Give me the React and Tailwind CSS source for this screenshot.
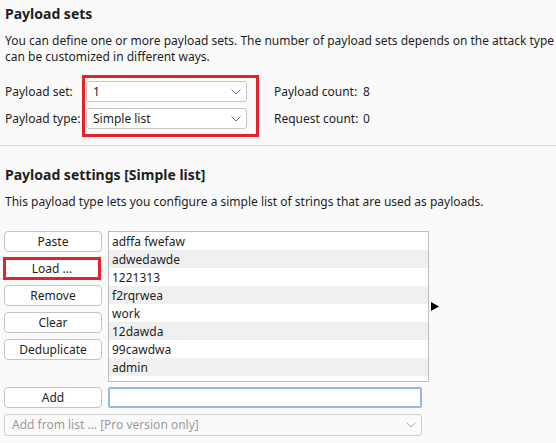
import React from "react";

const RED = "border-[#e5212b]";

function Chevron({ className = "" }) {
  return (
    <svg width="10" height="6" viewBox="0 0 10 6" className={className}>
      <path d="M0.5 0.5 L5 5 L9.5 0.5" fill="none" stroke="currentColor" strokeWidth="1" />
    </svg>
  );
}

function Select({ value, className = "" }) {
  return (
    <div
      className={`flex h-[21px] w-[161px] items-center justify-between rounded-[3px] border border-[#c6c6c6] bg-white pl-[6px] pr-[5px] ${className}`}
    >
      <span>{value}</span>
      <Chevron className="text-[#6b6b6b]" />
    </div>
  );
}

function Btn({ children, red = false }) {
  if (red) {
    return (
      <div className={`-ml-[1px] -my-[1px] flex h-[23px] w-[98px] items-center justify-center border-[3px] ${RED} bg-white`}>
        {children}
      </div>
    );
  }
  return (
    <div className="flex h-[21px] w-[98px] items-center justify-center rounded-[4px] border border-[#c4c4c4] bg-white">
      {children}
    </div>
  );
}

const items = ["adffa fwefaw", "adwedawde", "1221313", "f2rqrwea", "work", "12dawda", "99cawdwa", "admin"];

export default function App() {
  return (
    <div
      className="h-[443px] w-[556px] overflow-hidden bg-[#fafafa] text-[12px] text-[#1e1e1e]"
      style={{ fontFamily: '"Noto Sans", sans-serif' }}
    >
      {/* Section 1 */}
      <div className="px-[5px] pt-[4px]">
        <div className="text-[14px] font-bold leading-[20px]">Payload sets</div>
        <div className="mt-[9px] whitespace-nowrap leading-[16px]">
          You can define one or more payload sets. The number of payload sets depends on the attack type
          <br />
          can be customized in different ways.
        </div>
        <div className="relative mt-[16px] flex">
          <div className="flex w-[81px] flex-col gap-[6px]">
            <div className="flex h-[21px] items-center">Payload set:</div>
            <div className="flex h-[21px] items-center">Payload type:</div>
          </div>
          <div className="flex flex-col gap-[6px]">
            <Select value="1" />
            <Select value="Simple list" />
          </div>
          <div className="ml-[27px] flex flex-col gap-[6px]">
            <div className="flex h-[21px] items-center">
              <span className="w-[89px]">Payload count:</span>
              <span>8</span>
            </div>
            <div className="flex h-[21px] items-center">
              <span className="w-[89px]">Request count:</span>
              <span>0</span>
            </div>
          </div>
          <div className={`pointer-events-none absolute left-[77px] top-[-6px] h-[62px] w-[177px] border-[3px] ${RED}`} />
        </div>
      </div>

      <div className="mt-[16px] h-px w-full bg-[#d8d8d8]" />

      {/* Section 2 */}
      <div className="px-[4px] pt-[19px]">
        <div className="pl-[1px] text-[14px] font-bold leading-[20px]">Payload settings [Simple list]</div>
        <div className="mt-[9px] pl-[1px] leading-[16px]">
          This payload type lets you configure a simple list of strings that are used as payloads.
        </div>

        <div className="mt-[21px] flex">
          <div className="flex w-[98px] flex-col gap-[6px]">
            <Btn>Paste</Btn>
            <Btn red>Load ...</Btn>
            <Btn>Remove</Btn>
            <Btn>Clear</Btn>
            <Btn>Deduplicate</Btn>
          </div>
          <div className="ml-[6px] h-[151px] w-[321px] border border-[#bdbdbd] bg-white">
            {items.map((t, i) => (
              <div
                key={t}
                className={`h-[18px] pl-[3px] pt-[1px] leading-[17px] ${i % 2 === 1 ? "bg-[#f0f0f0]" : "bg-white"}`}
              >
                {t}
              </div>
            ))}
          </div>
          <div className="ml-[2px] flex items-center">
            <svg width="8" height="9" viewBox="0 0 8 9">
              <path d="M0 0 L8 4.5 L0 9 Z" fill="#000" />
            </svg>
          </div>
        </div>

        <div className="mt-[5px] flex gap-[6px]">
          <Btn>Add</Btn>
          <div className="h-[21px] w-[314px] rounded-[2px] border-2 border-[#92b9e6] bg-white" />
        </div>
        <div className="mt-[6px] flex h-[22px] w-[418px] items-center justify-between rounded-[3px] border border-[#cdcdcd] bg-[#fafafa] pl-[7px] pr-[5px] text-[#9a9a9a]">
          <span>Add from list ... [Pro version only]</span>
          <Chevron className="text-[#b4b4b4]" />
        </div>
      </div>
    </div>
  );
}
